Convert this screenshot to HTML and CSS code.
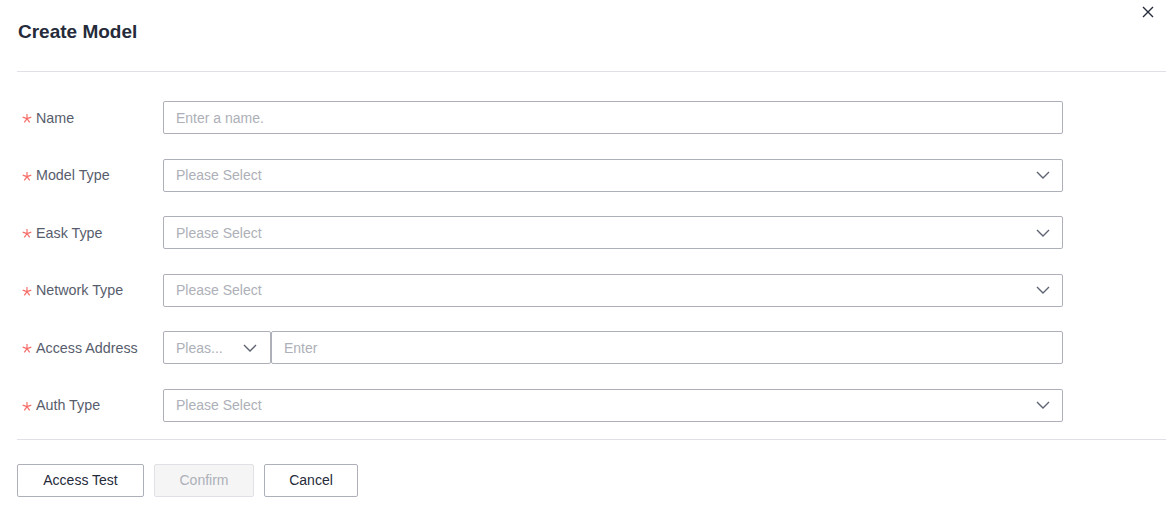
FILE: index.html
```html
<!DOCTYPE html>
<html>
<head>
<meta charset="utf-8">
<link rel="stylesheet" href="styles.css">
</head>
<body>
<div class="dialog">
  <div class="header">
    <h1 class="title">Create Model</h1>
    <button class="close" aria-label="Close">
      <svg width="12" height="12" viewBox="0 0 12 12"><path d="M1 1L11 11M11 1L1 11" stroke="#252b3a" stroke-width="1.4" fill="none"/></svg>
    </button>
  </div>
  <div class="form">
    <div class="row">
      <label class="label"><svg class="req" width="10" height="9" viewBox="0 0 9 9"><path d="M4.5 4.6V0M4.5 4.6L8.8 3.1M4.5 4.6L7.2 8.3M4.5 4.6L1.8 8.3M4.5 4.6L0.2 3.1" stroke="#f66f6a" stroke-width="1.2" fill="none"/></svg>Name</label>
      <div class="control input"><span class="ph">Enter a name.</span></div>
    </div>
    <div class="row">
      <label class="label"><svg class="req" width="10" height="9" viewBox="0 0 9 9"><path d="M4.5 4.6V0M4.5 4.6L8.8 3.1M4.5 4.6L7.2 8.3M4.5 4.6L1.8 8.3M4.5 4.6L0.2 3.1" stroke="#f66f6a" stroke-width="1.2" fill="none"/></svg>Model Type</label>
      <div class="control select"><span class="ph">Please Select</span><svg class="chev" width="14" height="8" viewBox="0 0 14 8"><path d="M1 1L7 7L13 1" stroke="#5e6372" stroke-width="1.4" fill="none"/></svg></div>
    </div>
    <div class="row">
      <label class="label"><svg class="req" width="10" height="9" viewBox="0 0 9 9"><path d="M4.5 4.6V0M4.5 4.6L8.8 3.1M4.5 4.6L7.2 8.3M4.5 4.6L1.8 8.3M4.5 4.6L0.2 3.1" stroke="#f66f6a" stroke-width="1.2" fill="none"/></svg>Eask Type</label>
      <div class="control select"><span class="ph">Please Select</span><svg class="chev" width="14" height="8" viewBox="0 0 14 8"><path d="M1 1L7 7L13 1" stroke="#5e6372" stroke-width="1.4" fill="none"/></svg></div>
    </div>
    <div class="row">
      <label class="label"><svg class="req" width="10" height="9" viewBox="0 0 9 9"><path d="M4.5 4.6V0M4.5 4.6L8.8 3.1M4.5 4.6L7.2 8.3M4.5 4.6L1.8 8.3M4.5 4.6L0.2 3.1" stroke="#f66f6a" stroke-width="1.2" fill="none"/></svg>Network Type</label>
      <div class="control select"><span class="ph">Please Select</span><svg class="chev" width="14" height="8" viewBox="0 0 14 8"><path d="M1 1L7 7L13 1" stroke="#5e6372" stroke-width="1.4" fill="none"/></svg></div>
    </div>
    <div class="row">
      <label class="label"><svg class="req" width="10" height="9" viewBox="0 0 9 9"><path d="M4.5 4.6V0M4.5 4.6L8.8 3.1M4.5 4.6L7.2 8.3M4.5 4.6L1.8 8.3M4.5 4.6L0.2 3.1" stroke="#f66f6a" stroke-width="1.2" fill="none"/></svg>Access Address</label>
      <div class="group">
        <div class="control select small"><span class="ph">Pleas...</span><svg class="chev" width="14" height="8" viewBox="0 0 14 8"><path d="M1 1L7 7L13 1" stroke="#5e6372" stroke-width="1.4" fill="none"/></svg></div>
        <div class="control input grow"><span class="ph">Enter</span></div>
      </div>
    </div>
    <div class="row">
      <label class="label"><svg class="req" width="10" height="9" viewBox="0 0 9 9"><path d="M4.5 4.6V0M4.5 4.6L8.8 3.1M4.5 4.6L7.2 8.3M4.5 4.6L1.8 8.3M4.5 4.6L0.2 3.1" stroke="#f66f6a" stroke-width="1.2" fill="none"/></svg>Auth Type</label>
      <div class="control select"><span class="ph">Please Select</span><svg class="chev" width="14" height="8" viewBox="0 0 14 8"><path d="M1 1L7 7L13 1" stroke="#5e6372" stroke-width="1.4" fill="none"/></svg></div>
    </div>
  </div>
  <div class="footer">
    <button class="btn">Access Test</button>
    <button class="btn disabled">Confirm</button>
    <button class="btn">Cancel</button>
  </div>
</div>
</body>
</html>
```
FILE: styles.css
```css
* { box-sizing: border-box; }
html, body { margin: 0; padding: 0; background: #fff; }
body { font-family: "Liberation Sans", Arial, sans-serif; color: #252b3a; }
.dialog { width: 1166px; padding-left: 17px; position: relative; }
.header { height: 72px; border-bottom: 1px solid #dfe1e6; padding: 20px 0 0 1px; }
.title { margin: 0; font-size: 19px; line-height: 24px; font-weight: bold; color: #252b3a; }
.close { position: absolute; right: 12px; top: 6px; border: 0; background: none; padding: 0; width: 12px; height: 12px; cursor: pointer; }
.close svg { display: block; }
.form { padding-top: 29px; padding-bottom: 17px; border-bottom: 1px solid #dfe1e6; }
.row { display: flex; align-items: center; height: 33px; margin-bottom: 24.6px; }
.row:last-child { margin-bottom: 0; }
.label { width: 146px; flex: none; font-size: 14.3px; color: #575d6c; padding-left: 5px; display: flex; align-items: center; }
.req { flex: none; display: block; margin-right: 4px; position: relative; top: 1px; }
.control { width: 900px; height: 33px; border: 1px solid #adb0b8; border-radius: 2px; display: flex; align-items: center; padding: 0 12px; font-size: 14px; }
.ph { color: #adb0b8; flex: 1; white-space: nowrap; }
.chev { flex: none; display: block; }
.group { display: flex; width: 900px; }
.control.small { width: 108px; flex: none; padding-right: 13px; }
.control.grow { flex: 1; width: auto; }
.footer { display: flex; gap: 10px; padding-top: 24px; }
.btn { height: 33px; border: 1px solid #adb0b8; border-radius: 2px; background: #fff; font-family: inherit; font-size: 14px; color: #252b3a; padding: 0; }
.btn:first-child { width: 127px; }
.btn.disabled { width: 100px; background: #f5f5f6; border-color: #dfe1e6; color: #adb0b8; }
.btn:last-child { width: 94px; }
```
